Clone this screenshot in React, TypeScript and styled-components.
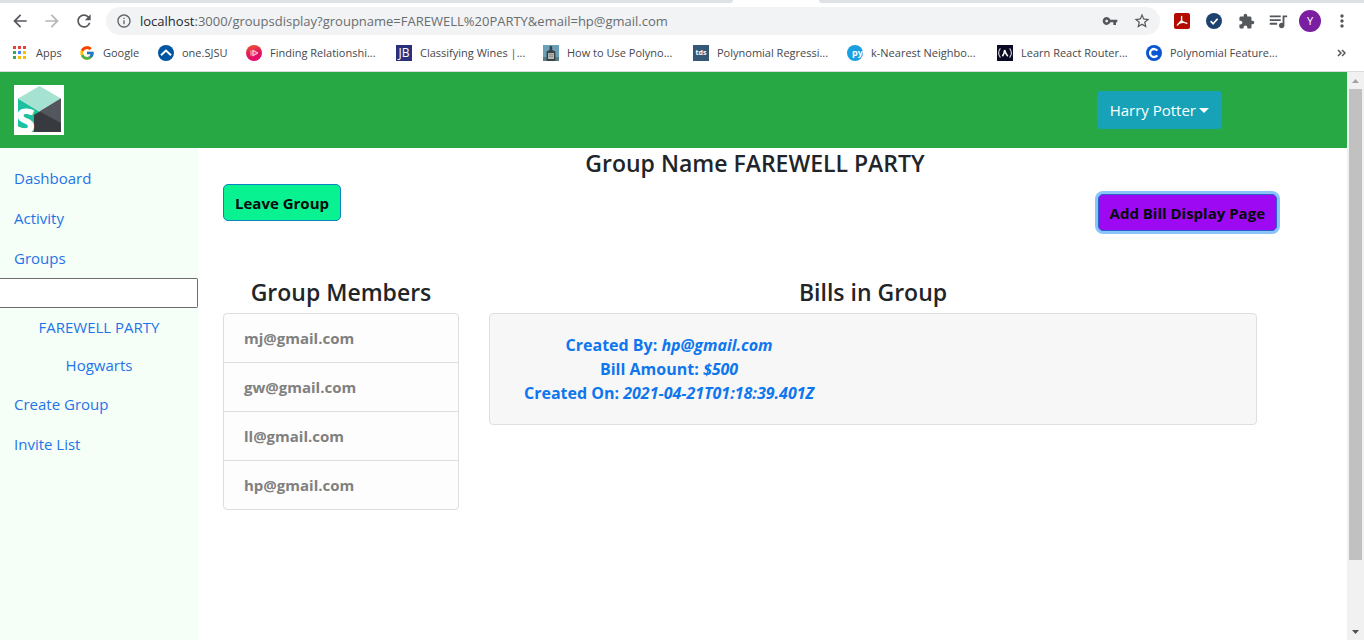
import React from "react";
import styled, { createGlobalStyle } from "styled-components";
import {
  MdArrowBack,
  MdArrowForward,
  MdRefresh,
  MdInfoOutline,
  MdVpnKey,
  MdStarBorder,
  MdExtension,
  MdQueueMusic,
  MdMoreVert,
} from "react-icons/md";
import { FcGoogle } from "react-icons/fc";

const GlobalStyle = createGlobalStyle`
  *, *::before, *::after { box-sizing: border-box; }
  body {
    margin: 0;
    background: #ffffff;
    color: #212529;
    font-family: "Open Sans", "Noto Sans", sans-serif;
    font-size: 15px;
    line-height: 24px;
  }
  button, input { font-family: inherit; }
`;

const Screen = styled.div`
  display: flex;
  flex-direction: column;
  min-height: 100vh;
`;

/* ---------- browser chrome ---------- */

const Chrome = styled.header`
  border-bottom: 1px solid #dadce0;
`;

const TabStrip = styled.div`
  display: flex;
  height: 3px;
`;

const InactiveTabs = styled.div<{ $share: number; $side: "left" | "right" }>`
  flex: ${(p) => p.$share} 1 0;
  background: #dee1e6;
  border-radius: ${(p) => (p.$side === "left" ? "0 0 6px 0" : "0 0 0 6px")};
`;

const ActiveTab = styled.div`
  flex: 0 0 86px;
`;

const Toolbar = styled.div`
  display: flex;
  align-items: center;
  padding: 4px 6px 0 4px;
`;

const ToolButton = styled.button<{ $dim?: boolean }>`
  display: flex;
  align-items: center;
  justify-content: center;
  width: 32px;
  height: 28px;
  padding: 0;
  border: 0;
  background: none;
  color: ${(p) => (p.$dim ? "#b4b6b9" : "#54575b")};
`;

const AddressBar = styled.div`
  display: flex;
  flex: 1;
  align-items: center;
  height: 28px;
  margin: 0 6px;
  padding: 0 2px 0 10px;
  border-radius: 14px;
  background: #f1f3f4;
  color: #5f6368;
`;

const Address = styled.div`
  flex: 1;
  margin-left: 8px;
  font-size: 13px;
  line-height: 20px;
  color: #696d71;
`;

const Host = styled.span`
  color: #26282b;
`;

const Avatar = styled.span`
  display: flex;
  align-items: center;
  justify-content: center;
  width: 22px;
  height: 22px;
  border-radius: 50%;
  background: #7b1fa2;
  color: #ffffff;
  font-size: 11px;
  line-height: 16px;
`;

const BookmarkBar = styled.nav`
  display: flex;
  align-items: center;
  height: 36px;
  padding: 0 18px 0 12px;
`;

const Bookmark = styled.a<{ $width: number }>`
  display: flex;
  align-items: center;
  gap: 8px;
  flex: 0 0 ${(p) => p.$width}px;
  color: #45484c;
  font-size: 11px;
  line-height: 16px;
  text-decoration: none;
  white-space: nowrap;
`;

const Overflow = styled.button`
  display: flex;
  margin-left: auto;
  padding: 0;
  border: 0;
  background: none;
  color: #54575b;
`;

/* ---------- application ---------- */

const Viewport = styled.div`
  display: flex;
  flex: 1;
`;

const Page = styled.div`
  display: flex;
  flex: 1;
  flex-direction: column;
`;

const NavBar = styled.div`
  display: flex;
  align-items: center;
  justify-content: space-between;
  padding: 13px 125px 13px 14px;
  background: #28a745;
`;

const LogoLink = styled.a`
  display: flex;
`;

const LogoDrawing = styled.svg`
  overflow: visible;
`;

const UserButton = styled.button`
  display: flex;
  align-items: center;
  gap: 3px;
  height: 38px;
  padding: 0 13px;
  border: 0;
  border-radius: 4px;
  background: #17a2b8;
  color: #ffffff;
  font-size: 15px;
  line-height: 24px;
`;

const Caret = styled.span`
  border-top: 5px solid #ffffff;
  border-right: 5px solid transparent;
  border-left: 5px solid transparent;
`;

const Body = styled.div`
  display: flex;
  flex: 1;
`;

const Sidebar = styled.nav`
  flex: 0 0 198px;
  padding-top: 10px;
  background: #f5fef7;
`;

const SideLink = styled.a`
  display: block;
  padding: 8px 14px;
  color: #1f74e8;
  text-decoration: none;
`;

const GroupLink = styled(SideLink)`
  padding: 7px 0;
  text-align: center;
`;

const SearchInput = styled.input`
  display: block;
  width: 100%;
  height: 30px;
  padding: 0 4px;
  border: 1px solid #6b6b6b;
  border-left: 0;
  border-radius: 0 2px 2px 0;
  background: #ffffff;
  font-size: 15px;
`;

const Main = styled.main`
  flex: 1;
  padding: 0 45px 0 10px;
`;

const Title = styled.h1`
  margin: 0;
  font-size: 23px;
  font-weight: 600;
  line-height: 30px;
  text-align: center;
`;

const Actions = styled.div`
  display: flex;
  align-items: flex-start;
  justify-content: space-between;
  height: 47px;
  margin: 6px 25px 46px 15px;
`;

const ActionButton = styled.button<{ $fill: string; $edge: string; $focus?: boolean }>`
  align-self: ${(p) => (p.$focus ? "flex-end" : "flex-start")};
  height: 37px;
  padding: 0 11px;
  border: 1px solid ${(p) => p.$edge};
  border-radius: 5px;
  background: ${(p) => p.$fill};
  box-shadow: ${(p) => (p.$focus ? "0 0 0 3px #8ac4fa" : "none")};
  color: #050a0c;
  font-size: 15px;
  font-weight: 700;
  line-height: 24px;
`;

const Columns = styled.div`
  display: flex;
  align-items: flex-start;
  padding-right: 30px;
`;

const Column = styled.section<{ $width: string }>`
  width: ${(p) => p.$width};
  padding: 0 15px;
`;

const ColumnTitle = styled(Title).attrs({ as: "h2" })`
  margin: 0 0 6px;
`;

const MemberList = styled.ul`
  margin: 0;
  padding: 0;
  list-style: none;
  border: 1px solid #dcdddd;
  border-radius: 4px;
  background: #fdfdfd;
`;

const Member = styled.li`
  padding: 12px 20px;
  color: #808080;
  font-weight: 700;

  & + & {
    border-top: 1px solid #dcdddd;
  }
`;

const BillCard = styled.article`
  display: flex;
  padding: 19px 20px;
  border: 1px solid #dfdfdf;
  border-radius: 4px;
  background: #f7f7f7;
`;

const BillLink = styled.a`
  padding: 0 14px;
  color: #0e76ee;
  font-size: 16px;
  font-weight: 700;
  text-align: center;
  text-decoration: none;
`;

const BillLine = styled.span`
  display: block;
`;

const ScrollTrack = styled.div`
  display: flex;
  flex: 0 0 17px;
  flex-direction: column;
  background: #f1f1f1;
`;

const ScrollArrow = styled.div`
  display: flex;
  align-items: center;
  justify-content: center;
  height: 17px;
`;

const ScrollThumb = styled.div`
  flex: 471 1 0;
  margin: 0 2px;
  background: #c1c1c1;
`;

const ScrollRest = styled.div`
  flex: 63 1 0;
`;

/* ---------- drawings ---------- */

const AppsIcon = () => (
  <svg width="16" height="16" viewBox="0 0 16 16" aria-hidden="true">
    {["#ea4335", "#ea4335", "#ea4335", "#34a853", "#4285f4", "#fbbc04", "#34a853", "#fbbc04", "#fbbc04"].map(
      (fill, i) => (
        <rect key={i} x={1 + (i % 3) * 5} y={1 + Math.floor(i / 3) * 5} width="3" height="3" fill={fill} />
      ),
    )}
  </svg>
);

const SjsuIcon = () => (
  <svg width="16" height="16" viewBox="0 0 16 16" aria-hidden="true">
    <circle cx="8" cy="8" r="8" fill="#0055a2" />
    <path d="M3 10.2 8 5.6l5 4.6" fill="none" stroke="#fff" strokeWidth="2" />
  </svg>
);

const PluralIcon = () => (
  <svg width="16" height="16" viewBox="0 0 16 16" aria-hidden="true">
    <defs>
      <linearGradient id="plural" x1="0" y1="0" x2="0.3" y2="1">
        <stop offset="0" stopColor="#f05a28" />
        <stop offset="0.6" stopColor="#e0185a" />
        <stop offset="1" stopColor="#e80a6d" />
      </linearGradient>
    </defs>
    <circle cx="8" cy="8" r="8" fill="url(#plural)" />
    <path d="M5 5.4v5.2M6.8 5v6L12 8Z" fill="#f08aa8" stroke="#ffc4d4" strokeWidth="1" />
    <path d="M8 7v2L9.8 8Z" fill="#e2185a" />
  </svg>
);

const TileIcon = ({ fill, label, size, font = "Open Sans", weight = 700, y = 12 }: {
  fill: string;
  label: string;
  size: number;
  font?: string;
  weight?: number;
  y?: number;
}) => (
  <svg width="16" height="16" viewBox="0 0 16 16" aria-hidden="true">
    <rect width="16" height="16" fill={fill} />
    <text x="8" y={y} fill="#fff" fontFamily={font} fontSize={size} fontWeight={weight} textAnchor="middle">
      {label}
    </text>
  </svg>
);

const MasteryIcon = () => (
  <svg width="16" height="16" viewBox="0 0 16 16" aria-hidden="true">
    <rect width="16" height="16" fill="#6ba0b8" />
    <path d="M0 12h16v4H0Z" fill="#5b7d86" />
    <path d="M6.6 1.5Q8 0 9.2 1.5V5L12.4 6.6V16H3.6V6.6L6.6 5Z" fill="#3a4246" />
    <path d="M5 8h6v6H5Z" fill="#b4b6b0" />
    <path d="M6 9.6h4M6 11.4h4" stroke="#7b817d" strokeWidth="0.7" />
  </svg>
);

const PyIcon = () => (
  <svg width="16" height="16" viewBox="0 0 16 16" aria-hidden="true">
    <circle cx="8" cy="8" r="8" fill="#1b9fe0" />
    <text x="5" y="11" fill="#fff" fontFamily="Open Sans" fontSize="9" fontWeight="700">
      py
    </text>
  </svg>
);

const CampIcon = () => (
  <svg width="16" height="16" viewBox="0 0 16 16" aria-hidden="true">
    <rect width="16" height="16" fill="#0a0a23" />
    <path d="M3.4 3.4Q-.2 8 3.4 12.6M12.6 3.4Q16.2 8 12.6 12.6" fill="none" stroke="#d8d8e0" strokeWidth="1.1" />
    <path d="M5.4 11.2Q7.4 8.6 7.6 5 8.6 8.6 10.8 11.2" fill="none" stroke="#fff" strokeWidth="1.5" />
  </svg>
);

const CourseraIcon = () => (
  <svg width="16" height="16" viewBox="0 0 16 16" aria-hidden="true">
    <circle cx="8" cy="8" r="8" fill="#0a55d4" />
    <path d="M11.3 5.7A4 4 0 1 0 11.3 10.3" fill="none" stroke="#fff" strokeWidth="2.3" />
  </svg>
);

const PdfIcon = () => (
  <svg width="16" height="16" viewBox="0 0 16 16" aria-hidden="true">
    <rect width="16" height="16" rx="2" fill="#b30b00" />
    <path
      d="M7.6 3.4V7.6M7.6 7.6 3.4 12M7.6 7.6Q9 9.6 12.8 10.2M5.6 10Q8 9 10.6 9.4"
      fill="none"
      stroke="#fff"
      strokeWidth="1.4"
      strokeLinecap="round"
    />
  </svg>
);

const CheckIcon = () => (
  <svg width="16" height="16" viewBox="0 0 16 16" aria-hidden="true">
    <circle cx="8" cy="8" r="8" fill="#1d4270" />
    <path d="m4.6 8.2 2.5 2.5 4.5-5" fill="none" stroke="#fff" strokeWidth="1.7" />
  </svg>
);

const ChevronsIcon = () => (
  <svg width="9" height="8" viewBox="0 0 9 8" aria-hidden="true">
    <path d="m1 1 3 3-3 3M5 1l3 3-3 3" fill="none" stroke="currentColor" strokeWidth="1.5" />
  </svg>
);

const SplitLogo = () => (
  <LogoDrawing width="50" height="50" viewBox="0 0 50 50" role="img" aria-label="Home">
    <rect width="50" height="50" fill="#fff" />
    <path d="M4 13.5 25.5 26.5 22 47H4Z" fill="#1cc29f" />
    <path d="M25.5 1 47 13.5 25.5 26.5 4 13.5Z" fill="#a6e2d2" />
    <path d="M47 13.5V47H20V30Z" fill="#373b3f" />
    <path d="M47 13.5V38L25.5 26.5Z" fill="#53565c" />
    <text x="2" y="48" fill="#fff" stroke="#fff" strokeWidth="1" fontFamily="Open Sans" fontSize="34" fontWeight="700">
      S
    </text>
  </LogoDrawing>
);

/* ---------- data ---------- */

const bookmarks: { label: string; width: number; icon: React.ReactNode }[] = [
  { label: "Apps", width: 67, icon: <AppsIcon /> },
  { label: "Google", width: 79, icon: <FcGoogle size={16} /> },
  { label: "one.SJSU", width: 88, icon: <SjsuIcon /> },
  { label: "Finding Relationshi...", width: 150, icon: <PluralIcon /> },
  { label: "Classifying Wines |...", width: 147, icon: <TileIcon fill="#2b2f7c" label="JB" size={12} y={12} weight={400} /> },
  { label: "How to Use Polyno...", width: 150, icon: <MasteryIcon /> },
  { label: "Polynomial Regressi...", width: 154, icon: <TileIcon fill="#355876" label="tds" size={7} y={10} /> },
  { label: "k-Nearest Neighbo...", width: 150, icon: <PyIcon /> },
  { label: "Learn React Router...", width: 149, icon: <CampIcon /> },
  { label: "Polynomial Feature...", width: 150, icon: <CourseraIcon /> },
];

const members = ["mj@gmail.com", "gw@gmail.com", "ll@gmail.com", "hp@gmail.com"];

const groups = ["FAREWELL PARTY", "Hogwarts"];

const bill = [
  { label: "Created By:", value: "hp@gmail.com" },
  { label: "Bill Amount:", value: "$500" },
  { label: "Created On:", value: "2021-04-21T01:18:39.401Z" },
];

export default function App() {
  return (
    <Screen>
      <GlobalStyle />
      <Chrome>
        <TabStrip>
          <InactiveTabs $share={733} $side="left" />
          <ActiveTab />
          <InactiveTabs $share={545} $side="right" />
        </TabStrip>
        <Toolbar>
          <ToolButton aria-label="Back"><MdArrowBack size={20} /></ToolButton>
          <ToolButton aria-label="Forward" $dim><MdArrowForward size={20} /></ToolButton>
          <ToolButton aria-label="Reload"><MdRefresh size={20} /></ToolButton>
          <AddressBar>
            <MdInfoOutline size={16} />
            <Address>
              <Host>localhost</Host>:3000/groupsdisplay?groupname=FAREWELL%20PARTY&amp;email=hp@gmail.com
            </Address>
            <ToolButton aria-label="Passwords"><MdVpnKey size={16} /></ToolButton>
            <ToolButton aria-label="Bookmark this page"><MdStarBorder size={18} /></ToolButton>
          </AddressBar>
          <ToolButton aria-label="PDF tools"><PdfIcon /></ToolButton>
          <ToolButton aria-label="Checker"><CheckIcon /></ToolButton>
          <ToolButton aria-label="Extensions"><MdExtension size={17} /></ToolButton>
          <ToolButton aria-label="Media"><MdQueueMusic size={22} /></ToolButton>
          <ToolButton aria-label="Profile"><Avatar>Y</Avatar></ToolButton>
          <ToolButton aria-label="Menu"><MdMoreVert size={20} /></ToolButton>
        </Toolbar>
        <BookmarkBar aria-label="Bookmarks">
          {bookmarks.map((b) => (
            <Bookmark key={b.label} href="#" $width={b.width}>
              {b.icon}
              {b.label}
            </Bookmark>
          ))}
          <Overflow aria-label="More bookmarks"><ChevronsIcon /></Overflow>
        </BookmarkBar>
      </Chrome>

      <Viewport>
        <Page>
          <NavBar>
            <LogoLink href="#"><SplitLogo /></LogoLink>
            <UserButton>
              Harry Potter
              <Caret />
            </UserButton>
          </NavBar>
          <Body>
            <Sidebar aria-label="Main">
              <SideLink href="#">Dashboard</SideLink>
              <SideLink href="#">Activity</SideLink>
              <SideLink href="#">Groups</SideLink>
              <SearchInput type="text" aria-label="Search groups" />
              {groups.map((g) => (
                <GroupLink key={g} href="#">{g}</GroupLink>
              ))}
              <SideLink href="#">Create Group</SideLink>
              <SideLink href="#">Invite List</SideLink>
            </Sidebar>
            <Main>
              <Title>Group Name FAREWELL PARTY</Title>
              <Actions>
                <ActionButton $fill="#09f291" $edge="#0d83c4">Leave Group</ActionButton>
                <ActionButton $fill="#9d09f2" $edge="#2c5fc8" $focus>Add Bill Display Page</ActionButton>
              </Actions>
              <Columns>
                <Column $width="25%">
                  <ColumnTitle>Group Members</ColumnTitle>
                  <MemberList>
                    {members.map((m) => (
                      <Member key={m}>{m}</Member>
                    ))}
                  </MemberList>
                </Column>
                <Column $width="75%">
                  <ColumnTitle>Bills in Group</ColumnTitle>
                  <BillCard>
                    <BillLink href="#">
                      {bill.map((line) => (
                        <BillLine key={line.label}>
                          {line.label} <em>{line.value}</em>
                        </BillLine>
                      ))}
                    </BillLink>
                  </BillCard>
                </Column>
              </Columns>
            </Main>
          </Body>
        </Page>
        <ScrollTrack aria-hidden="true">
          <ScrollArrow>
            <svg width="7" height="4" viewBox="0 0 7 4"><path d="M0 4 3.5 0 7 4Z" fill="#a3a3a3" /></svg>
          </ScrollArrow>
          <ScrollThumb />
          <ScrollRest />
          <ScrollArrow>
            <svg width="7" height="4" viewBox="0 0 7 4"><path d="M0 0 3.5 4 7 0Z" fill="#505050" /></svg>
          </ScrollArrow>
        </ScrollTrack>
      </Viewport>
    </Screen>
  );
}
